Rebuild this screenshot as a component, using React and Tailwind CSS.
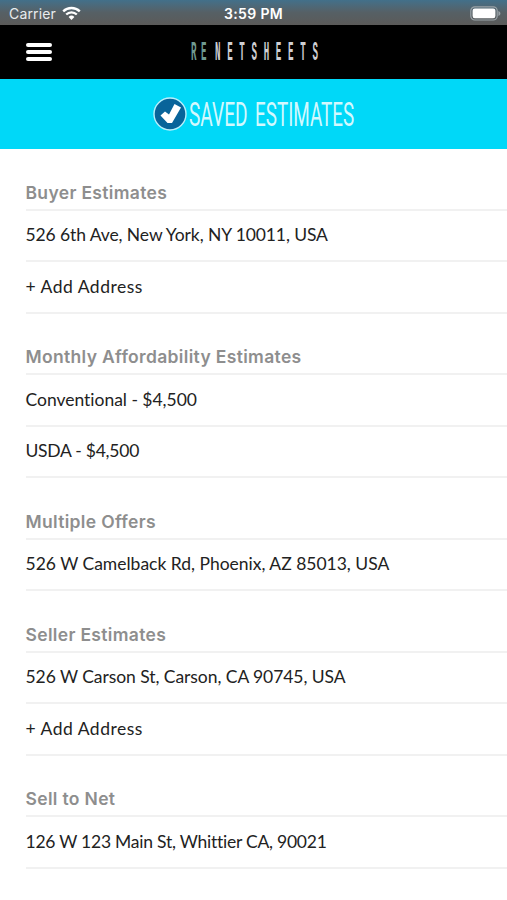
import React from 'react';

const sections = [
  {
    title: 'Buyer Estimates',
    items: [
      { label: '526 6th Ave, New York, NY 10011, USA', tracking: 'tracking-[-0.1px]' },
      { label: '+ Add Address', tracking: 'tracking-[0.5px]' },
    ],
  },
  {
    title: 'Monthly Affordability Estimates',
    items: [
      { label: 'Conventional - $4,500', tracking: 'tracking-[-0.02px]' },
      { label: 'USDA - $4,500', tracking: 'tracking-[-0.25px]' },
    ],
  },
  {
    title: 'Multiple Offers',
    items: [{ label: '526 W Camelback Rd, Phoenix, AZ 85013, USA', tracking: 'tracking-[-0.01px]' }],
  },
  {
    title: 'Seller Estimates',
    items: [
      { label: '526 W Carson St, Carson, CA 90745, USA', tracking: 'tracking-[-0.06px]' },
      { label: '+ Add Address', tracking: 'tracking-[0.5px]' },
    ],
  },
  {
    title: 'Sell to Net',
    items: [{ label: '126 W 123 Main St, Whittier CA, 90021', tracking: 'tracking-[-0.24px]' }],
  },
];

function StatusBar() {
  return (
    <div className="grid h-[25px] grid-cols-3 items-center bg-linear-to-b from-[#42708a] via-[#566065] to-[#5b5a59] pt-[2px] font-['Inter',sans-serif] text-white">
      <div className="flex items-center gap-[6px] pl-[9px]">
        <span className="text-[14px] leading-none tracking-[0.15px] text-[#e8ecee]">Carrier</span>
        <svg width="19" height="15" viewBox="0 0 19 15" fill="none" stroke="#fff" strokeWidth="2.3">
          <path d="M1.2 5.4a11.8 11.8 0 0 1 16.6 0" />
          <path d="M4.2 8.5a7.5 7.5 0 0 1 10.6 0" />
          <path d="M9.5 14 6.6 11a4.1 4.1 0 0 1 5.8 0z" fill="#fff" stroke="none" />
        </svg>
      </div>
      <div className="pt-px text-center text-[14px] leading-none font-semibold tracking-[0.35px]">3:59 PM</div>
      <div className="flex justify-end pr-[6px]">
        <svg width="31" height="15" viewBox="0 0 31 15">
          <rect x="0.8" y="0.8" width="26.4" height="13.2" rx="4" fill="none" stroke="#9aa3a8" strokeWidth="1.2" />
          <rect x="2.6" y="2.6" width="22.8" height="9.6" rx="2.2" fill="#fff" />
          <path d="M28.4 5v5c1.2-.5 2-1.4 2-2.5s-.8-2-2-2.500z" fill="#9aa3a8" />
        </svg>
      </div>
    </div>
  );
}

function NavBar() {
  return (
    <header className="flex h-[54px] items-center bg-black px-[26px]">
      <button className="flex w-[26px] flex-col gap-[3px]" aria-label="Menu">
        <span className="h-[4px] rounded-full bg-white"></span>
        <span className="h-[4px] rounded-full bg-white"></span>
        <span className="h-[4px] rounded-full bg-white"></span>
      </button>
      <div className="ml-[139px] flex pt-[2px] font-['Liberation_Mono',monospace] text-[27px] leading-none font-bold">
        <span className="w-[24px] origin-left scale-x-[0.34] tracking-[13.2px] text-[#6f9a91]">RE</span>
        <span className="w-[110px] origin-left scale-x-[0.34] tracking-[19.6px] text-[#cfcfd3]">NETSHEETS</span>
      </div>
    </header>
  );
}

function TitleBar() {
  return (
    <div className="flex h-[70px] items-center bg-[#00d8f8] pl-[153px]">
      <svg width="34" height="34" viewBox="0 0 34 34">
        <circle cx="17" cy="17" r="16" fill="#08649a" stroke="#b9effb" strokeWidth="1.4" />
        <path d="M7.500 18.500 12 14.500 16 17.500 21.500 7 28 10.500 19 26H14.500z" fill="#fff" />
      </svg>
      <h1 className="ml-[2px] flex font-['Roboto',sans-serif] text-[33px] leading-none text-[#d3f8fe]">
        <span className="w-[66px] origin-left scale-x-[0.58]">SAVED</span>
        <span className="w-[100px] origin-left scale-x-[0.572]">ESTIMATES</span>
      </h1>
    </div>
  );
}

function EstimateSection({ section }) {
  return (
    <section className="pl-[25.5px]">
      <h2 className="flex h-[61.5px] items-end border-b-2 border-[#f1f1f1] pb-[5px] font-['Inter',sans-serif] text-[17.5px] leading-[22px] font-semibold tracking-[0.33px] text-[#8e8e8e]">
        {section.title}
      </h2>
      {section.items.map((item) => (
        <div
          key={item.label}
          className="flex h-[51.5px] items-center border-b-2 border-[#f1f1f1] font-['Lato',sans-serif] text-[17.5px] whitespace-nowrap text-[#222]"
        >
          <span className={item.tracking}>{item.label}</span>
        </div>
      ))}
    </section>
  );
}

export default function App() {
  return (
    <div className="h-[900px] w-[507px] overflow-hidden bg-white">
      <StatusBar />
      <NavBar />
      <TitleBar />
      <main>
        {sections.map((section) => (
          <EstimateSection key={section.title} section={section} />
        ))}
      </main>
    </div>
  );
}
